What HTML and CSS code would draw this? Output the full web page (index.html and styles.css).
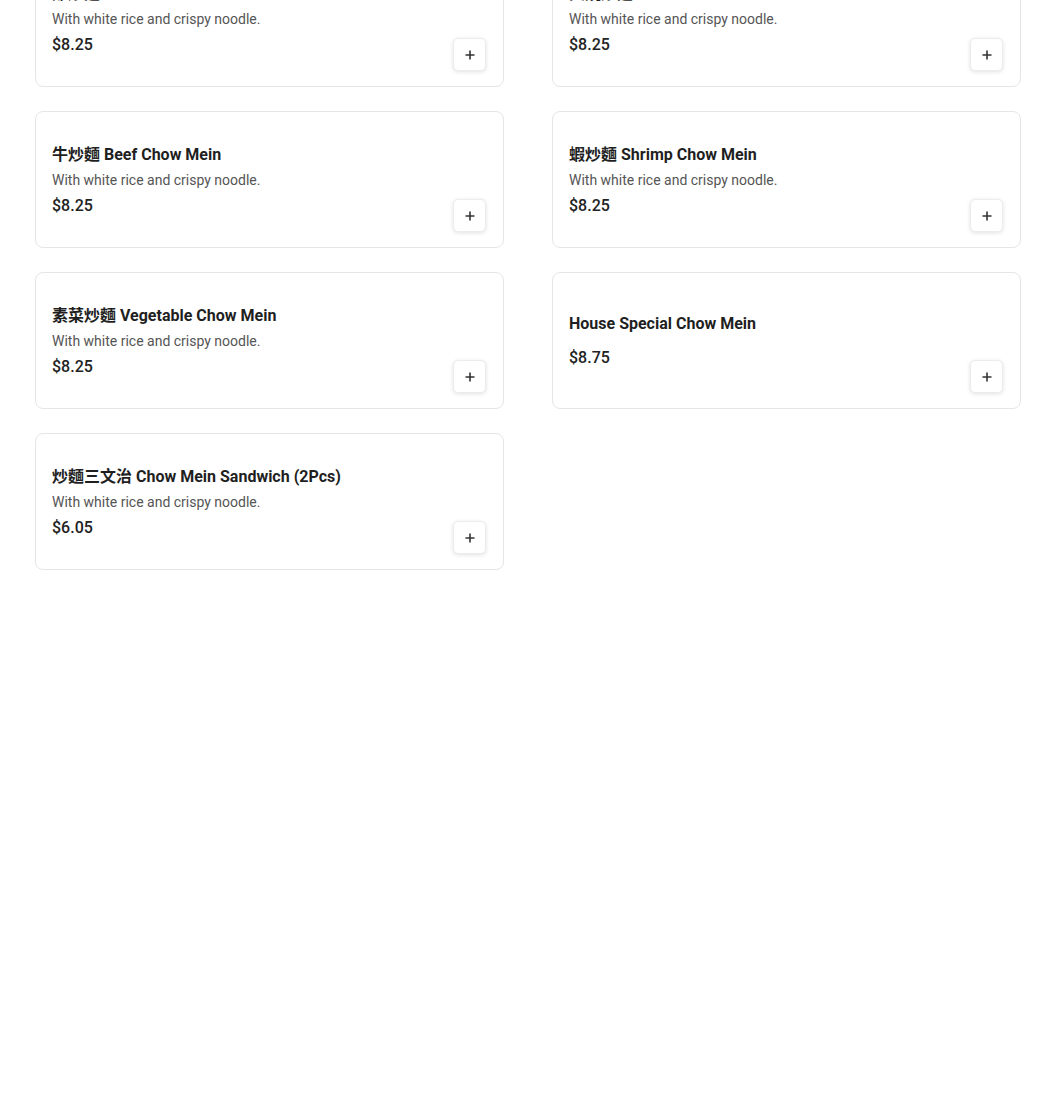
FILE: index.html
```html
<!DOCTYPE html>
<html lang="en">
  <head>
    <meta charset="UTF-8" />
    <title>Chow Mein</title>
    <link rel="stylesheet" href="styles.css">
  </head>
  <body>
    <div class="menu-grid">
      <div class="item-card">
        <div class="item-info">
          <div class="item-name">雞炒麵 Chicken Chow Mein</div>
          <div class="item-desc">With white rice and crispy noodle.</div>
          <div class="item-price">$8.25</div>
        </div>
        <button class="add-btn" type="button">
          <svg viewBox="0 0 12 12" width="12" height="12"><path d="M6 1.5v9M1.5 6h9" /></svg>
        </button>
      </div>
      <div class="item-card">
        <div class="item-info">
          <div class="item-name">叉燒炒麵 Roast Pork Chow Mein</div>
          <div class="item-desc">With white rice and crispy noodle.</div>
          <div class="item-price">$8.25</div>
        </div>
        <button class="add-btn" type="button">
          <svg viewBox="0 0 12 12" width="12" height="12"><path d="M6 1.5v9M1.5 6h9" /></svg>
        </button>
      </div>
      <div class="item-card">
        <div class="item-info">
          <div class="item-name">牛炒麵 Beef Chow Mein</div>
          <div class="item-desc">With white rice and crispy noodle.</div>
          <div class="item-price">$8.25</div>
        </div>
        <button class="add-btn" type="button">
          <svg viewBox="0 0 12 12" width="12" height="12"><path d="M6 1.5v9M1.5 6h9" /></svg>
        </button>
      </div>
      <div class="item-card">
        <div class="item-info">
          <div class="item-name">蝦炒麵 Shrimp Chow Mein</div>
          <div class="item-desc">With white rice and crispy noodle.</div>
          <div class="item-price">$8.25</div>
        </div>
        <button class="add-btn" type="button">
          <svg viewBox="0 0 12 12" width="12" height="12"><path d="M6 1.5v9M1.5 6h9" /></svg>
        </button>
      </div>
      <div class="item-card">
        <div class="item-info">
          <div class="item-name">素菜炒麵 Vegetable Chow Mein</div>
          <div class="item-desc">With white rice and crispy noodle.</div>
          <div class="item-price">$8.25</div>
        </div>
        <button class="add-btn" type="button">
          <svg viewBox="0 0 12 12" width="12" height="12"><path d="M6 1.5v9M1.5 6h9" /></svg>
        </button>
      </div>
      <div class="item-card">
        <div class="item-info">
          <div class="item-name">House Special Chow Mein</div>
          <div class="item-price">$8.75</div>
        </div>
        <button class="add-btn" type="button">
          <svg viewBox="0 0 12 12" width="12" height="12"><path d="M6 1.5v9M1.5 6h9" /></svg>
        </button>
      </div>
      <div class="item-card">
        <div class="item-info">
          <div class="item-name">炒麵三文治 Chow Mein Sandwich (2Pcs)</div>
          <div class="item-desc">With white rice and crispy noodle.</div>
          <div class="item-price">$6.05</div>
        </div>
        <button class="add-btn" type="button">
          <svg viewBox="0 0 12 12" width="12" height="12"><path d="M6 1.5v9M1.5 6h9" /></svg>
        </button>
      </div>
    </div>
  </body>
</html>
```

FILE: styles.css
```css
body {
  margin: 0;
  padding: 0;
  background-color: #fff;
  font-family: Roboto, "Noto Sans CJK TC", sans-serif;
  color: #222;
}

.menu-grid {
  display: grid;
  grid-template-columns: 1fr 1fr;
  column-gap: 48px;
  row-gap: 24px;
  padding: 0 29px 0 35px;
  margin-top: -50px;
}

.item-card {
  box-sizing: border-box;
  height: 137px;
  display: flex;
  justify-content: space-between;
  padding: 19px 17px 15px 16px;
  border: 1px solid #e6e6e6;
  border-radius: 8px;
  background-color: #fff;
}

.item-info {
  display: flex;
  flex-direction: column;
  justify-content: center;
}

.item-name {
  font-size: 16px;
  font-weight: 700;
  line-height: 20px;
  color: #1f1f1f;
}

.item-desc {
  margin-top: 5px;
  font-size: 14px;
  line-height: 20px;
  color: #555;
}

.item-price {
  margin-top: 4px;
  font-size: 16px;
  font-weight: 500;
  line-height: 24px;
  color: #222;
}

.item-name + .item-price {
  margin-top: 12px;
  margin-bottom: 2px;
}

.add-btn {
  align-self: flex-end;
  width: 33px;
  height: 33px;
  padding: 0;
  display: flex;
  align-items: center;
  justify-content: center;
  background-color: #fff;
  border: 1px solid #ececec;
  border-radius: 5px;
  box-shadow: 0 1px 4px rgba(0, 0, 0, 0.12);
  cursor: pointer;
}

.add-btn svg path {
  stroke: #333;
  stroke-width: 1.6;
  fill: none;
}
```
